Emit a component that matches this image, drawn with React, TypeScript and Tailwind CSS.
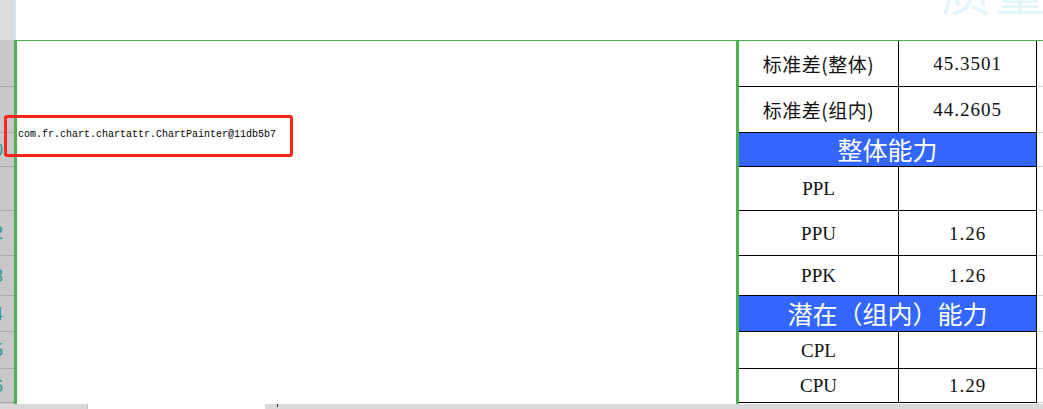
import React from "react";

type Row =
  | { kind: "cell"; h: string; l: string; r: string; hd: string; cjk?: boolean }
  | { kind: "head"; h: string; t: string; hd: string };

const rows: Row[] = [
  { kind: "cell", h: "h-[46px]", l: "标准差(整体)", r: "45.3501", hd: "", cjk: true },
  { kind: "cell", h: "h-[46px]", l: "标准差(组内)", r: "44.2605", hd: "", cjk: true },
  { kind: "head", h: "h-[34px]", t: "整体能力", hd: "10" },
  { kind: "cell", h: "h-[44px]", l: "PPL", r: "", hd: "" },
  { kind: "cell", h: "h-[45px]", l: "PPU", r: "1.26", hd: "12" },
  { kind: "cell", h: "h-[40px]", l: "PPK", r: "1.26", hd: "13" },
  { kind: "head", h: "h-[36px]", t: "潜在（组内）能力", hd: "14" },
  { kind: "cell", h: "h-[37px]", l: "CPL", r: "", hd: "15" },
  { kind: "cell", h: "h-[34px]", l: "CPU", r: "1.29", hd: "16" },
];

export default function App() {
  return (
    <div className="relative w-[1043px] h-[409px] overflow-hidden bg-white flex flex-col">
      {/* top strip */}
      <div className="h-[40px] flex shrink-0">
        <div className="w-[15px] bg-[#dcdcdc]" />
        <div className="w-[1px] bg-[#cfe9f7]" />
        <div className="relative flex-1 overflow-hidden">
          <div className="absolute left-[925px] top-[-36px] whitespace-nowrap text-[50px] leading-none tracking-[4px] text-[#e2f5fb] font-['Noto_Sans_CJK_SC',sans-serif]">
            质量
          </div>
        </div>
      </div>
      <div className="h-[1px] flex shrink-0">
        <div className="w-[14px] bg-[#c8c8c8]" />
        <div className="flex-1 bg-[#4cae4c]" />
      </div>

      {/* middle */}
      <div className="h-[363px] flex shrink-0">
        {/* row header */}
        <div className="w-[14px] bg-[#c8c8c8] flex flex-col">
          {rows.map((r, i) => (
            <div
              key={i}
              className={`${r.h} border-b border-[#a9a9a9] flex items-center justify-end overflow-hidden pr-[11px] text-[18px] leading-none text-[#2e9a8e] font-['Liberation_Sans',sans-serif]`}
            >
              <span className="whitespace-nowrap">{r.hd}</span>
            </div>
          ))}
        </div>
        <div className="w-[3px] bg-[#4caf50]" />
        {/* content area */}
        <div className="w-[719px] flex flex-col">
          <div className="mt-[88px] pl-[1px] font-['Liberation_Mono',monospace] text-[10px] leading-[12px] text-black whitespace-nowrap">
            com.fr.chart.chartattr.ChartPainter@11db5b7
          </div>
        </div>
        <div className="w-[3px] bg-[#4caf50]" />
        {/* table */}
        <div className="w-[298px] flex flex-col">
          {rows.map((r, i) =>
            r.kind === "head" ? (
              <div
                key={i}
                className={`${r.h} bg-[#3366ff] border-b border-r border-black flex items-center justify-center text-white text-[25px] leading-none font-['Noto_Sans_CJK_SC',sans-serif]`}
              >
                {r.t}
              </div>
            ) : (
              <div key={i} className={`${r.h} flex border-b border-black`}>
                <div
                  className={`w-[160px] border-r border-black flex items-center justify-center text-[#111] leading-none ${
                    r.cjk
                      ? "text-[19px] tracking-[0.5px] font-['Noto_Sans_CJK_SC',sans-serif]"
                      : "text-[19px] font-['Liberation_Serif',serif]"
                  }`}
                >
                  {r.l}
                </div>
                <div className="w-[138px] border-r border-black flex items-center justify-center text-[19px] tracking-[1px] leading-none text-[#111] font-['Liberation_Serif',serif]">
                  {r.r}
                </div>
              </div>
            )
          )}
        </div>
        {/* remainder */}
        <div className="flex-1 flex flex-col">
          {rows.map((r, i) => (
            <div key={i} className={`${r.h} border-b border-[#d4d4d4]`} />
          ))}
        </div>
      </div>

      {/* bottom scroll bar */}
      <div className="h-[5px] flex shrink-0">
        <div className="w-[88px] bg-[#d9d9d9] border-r border-[#c4c4c4]" />
        <div className="w-[177px] bg-white" />
        <div className="flex-1 bg-[#d9d9d9] flex">
          <div className="ml-[12px] w-[1px] h-[3px] bg-[#333]" />
        </div>
      </div>

      {/* red annotation box */}
      <div className="absolute left-[4px] top-[115px] w-[289px] h-[42px] border-[3px] border-[#ff2418] rounded-[3px]" />
    </div>
  );
}
